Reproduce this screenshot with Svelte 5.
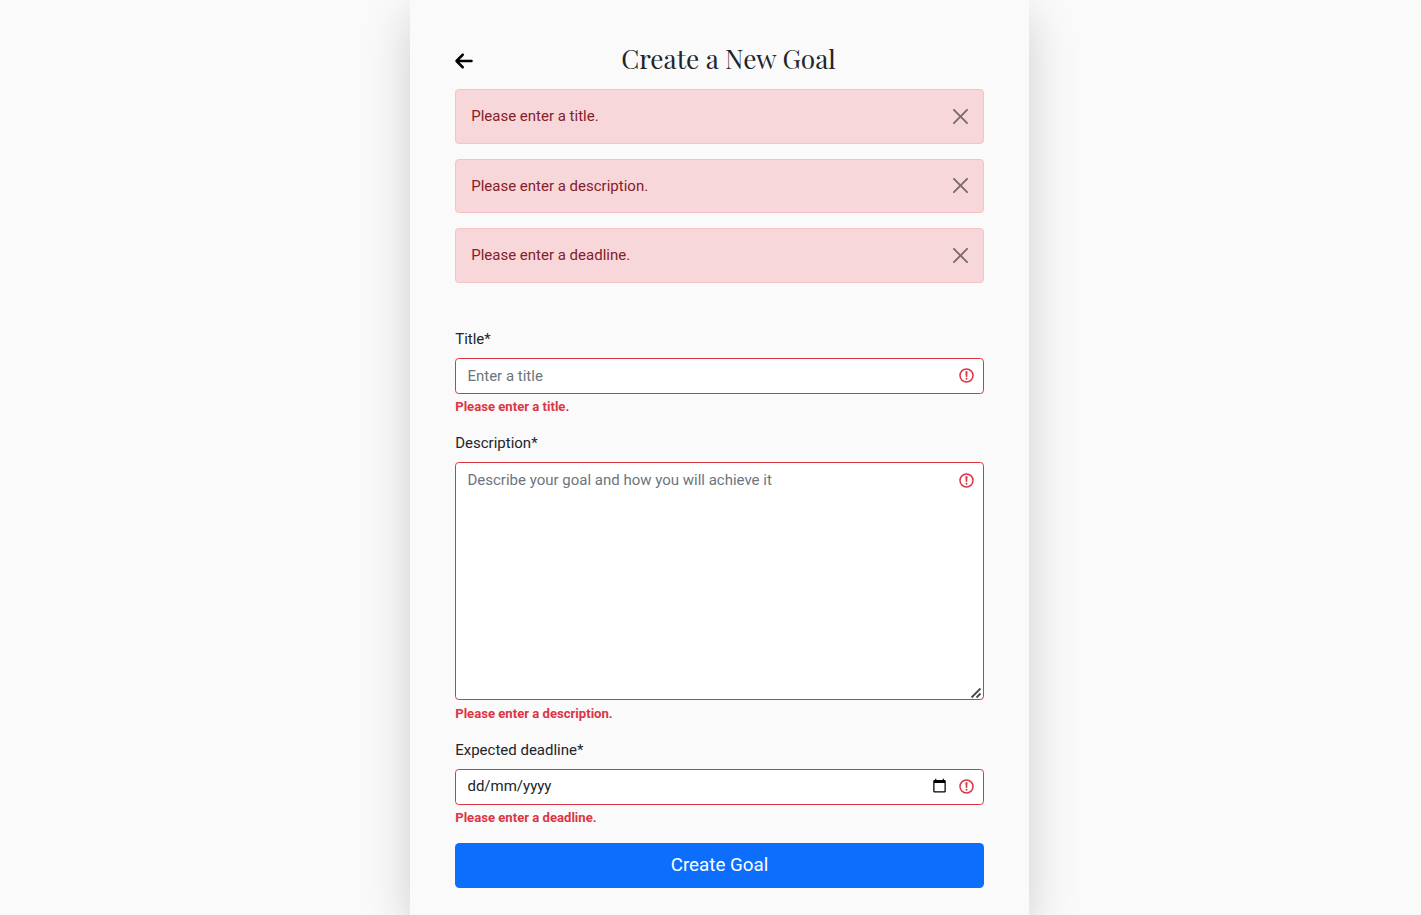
<script>
  let alerts = $state(['Please enter a title.', 'Please enter a description.', 'Please enter a deadline.']);
  let title = $state('');
  let description = $state('');
  let deadline = $state('dd/mm/yyyy');

  function dismiss(index) {
    alerts.splice(index, 1);
  }
</script>

{#snippet warning()}
  <svg class="warning" viewBox="0 0 15 15" aria-hidden="true">
    <circle cx="7.5" cy="7.5" r="6.5" fill="none" stroke="#dc3545" stroke-width="1.5" />
    <path d="M6.400 3.300h2.200L8.200 9H6.800z" fill="#dc3545" />
    <circle cx="7.5" cy="10.7" r="1" fill="#dc3545" />
  </svg>
{/snippet}

<main class="panel">
  <header>
    <button class="back" type="button" aria-label="Back">
      <svg viewBox="0 0 448 512"><path d="M9.4 233.4c-12.5 12.5-12.5 32.8 0 45.3l160 160c12.5 12.5 32.8 12.5 45.3 0s12.5-32.8 0-45.3L109.2 288 416 288c17.7 0 32-14.3 32-32s-14.3-32-32-32l-306.7 0L214.6 118.6c12.5-12.5 12.5-32.8 0-45.3s-32.8-12.5-45.3 0l-160 160z" /></svg>
    </button>
    <h1>Create a New Goal</h1>
  </header>

  <div class="alerts">
    {#each alerts as message, i (message)}
      <div class="alert" role="alert">
        <span>{message}</span>
        <button class="close" type="button" aria-label="Close" onclick={() => dismiss(i)}>
          <svg viewBox="0 0 16 16"><path d="M.293.293a1 1 0 0 1 1.414 0L8 6.586 14.293.293a1 1 0 1 1 1.414 1.414L9.414 8l6.293 6.293a1 1 0 0 1-1.414 1.414L8 9.414l-6.293 6.293a1 1 0 0 1-1.414-1.414L6.586 8 .293 1.707a1 1 0 0 1 0-1.414z" /></svg>
        </button>
      </div>
    {/each}
  </div>

  <form novalidate>
    <div class="field">
      <label for="title">Title*</label>
      <div class="control">
        <input id="title" type="text" placeholder="Enter a title" bind:value={title} />
        {@render warning()}
      </div>
      <div class="feedback">Please enter a title.</div>
    </div>
    <div class="field">
      <label for="description">Description*</label>
      <div class="control tall">
        <textarea id="description" placeholder="Describe your goal and how you will achieve it" bind:value={description}></textarea>
        {@render warning()}
        <svg class="grip" viewBox="0 0 12 12" aria-hidden="true"><path d="M1.500 10.500 10.500 1.500M6.500 10.500 10.500 6.500" fill="none" stroke="#4a4a4a" stroke-width="1.800" /></svg>
      </div>
      <div class="feedback">Please enter a description.</div>
    </div>
    <div class="field">
      <label for="deadline">Expected deadline*</label>
      <div class="control date">
        <input id="deadline" type="text" bind:value={deadline} />
        <svg class="calendar" viewBox="0 0 24 24" aria-hidden="true"><path d="M20 3h-1V1h-2v2H7V1H5v2H4c-1.1 0-2 .9-2 2v16c0 1.1.9 2 2 2h16c1.1 0 2-.9 2-2V5c0-1.100-.9-2-2-2zm0 18H4V8h16v13z" /></svg>
        {@render warning()}
      </div>
      <div class="feedback">Please enter a deadline.</div>
    </div>
    <button class="submit" type="button">Create Goal</button>
  </form>
</main>

<style>
  :global(html) {
    font-size: 15px;
  }
  :global(body) {
    margin: 0;
    background: #fafafa;
    overflow: hidden;
  }
  .panel,
  .panel * {
    box-sizing: border-box;
  }
  .panel {
    width: 618.6px;
    min-height: 915px;
    margin-left: 410.2px;
    padding: 44.4px 45px 27px;
    background: #fafafa;
    box-shadow: 0 1rem 3rem rgba(0, 0, 0, 0.175);
    font: 400 1rem/1.5 Roboto, sans-serif;
    color: #212529;
  }
  button {
    border: 0;
    margin: 0;
    padding: 0;
    background: none;
    cursor: pointer;
  }
  header {
    display: flex;
    height: 45px;
  }
  .back {
    width: 18px;
    height: 20px;
    margin-top: 7px;
  }
  .back svg {
    display: block;
    width: 18px;
    height: 20px;
  }
  h1 {
    flex: 1;
    margin: 0;
    text-align: center;
    font: 400 1.75rem/30px "Playfair Display", "Liberation Serif", serif;
    white-space: nowrap;
  }
  .alert {
    display: flex;
    align-items: center;
    justify-content: space-between;
    height: 54.5px;
    margin-bottom: 1rem;
    padding: 0 15px;
    border: 1px solid #f5c2c7;
    border-radius: 0.25rem;
    background: #f8d7da;
    color: #842029;
  }
  .close {
    width: 15px;
    height: 15px;
    margin-top: -0.5px;
    opacity: 0.5;
  }
  .close svg {
    display: block;
    width: 15px;
    height: 15px;
  }
  form {
    padding-top: 30px;
  }
  .field {
    margin-bottom: 1rem;
  }
  label {
    display: block;
    margin-bottom: 0.5rem;
  }
  .control {
    position: relative;
    height: 35.75px;
  }
  .tall {
    height: 238px;
  }
  .date {
    height: 36px;
  }
  input,
  textarea {
    display: block;
    width: 100%;
    height: 100%;
    margin: 0;
    padding: 0.375rem 60px 0.375rem 0.75rem;
    border: 1px solid #dc3545;
    border-radius: 0.25rem;
    outline: 0;
    background: #fff;
    color: #212529;
    font: inherit;
  }
  .date input {
    padding-top: 5px;
    padding-bottom: 6.5px;
  }
  textarea {
    resize: none;
  }
  ::placeholder {
    color: #6c757d;
    opacity: 1;
  }
  .warning {
    position: absolute;
    top: 10.3px;
    right: 10px;
    width: 15px;
    height: 15px;
  }
  .tall .warning {
    top: 11px;
  }
  .grip {
    position: absolute;
    right: 2px;
    bottom: 1px;
    width: 12px;
    height: 12px;
  }
  .calendar {
    position: absolute;
    top: 9.7px;
    right: 37px;
    width: 15px;
    height: 15px;
  }
  .feedback {
    margin-top: 0.25rem;
    font-size: 0.875em;
    font-weight: 700;
    color: #dc3545;
  }
  .submit {
    display: block;
    width: 100%;
    height: 45.1px;
    border-radius: 0.3rem;
    background: #0d6efd;
    color: #fff;
    font: 400 1.25rem/1.5 Roboto, sans-serif;
  }
</style>
